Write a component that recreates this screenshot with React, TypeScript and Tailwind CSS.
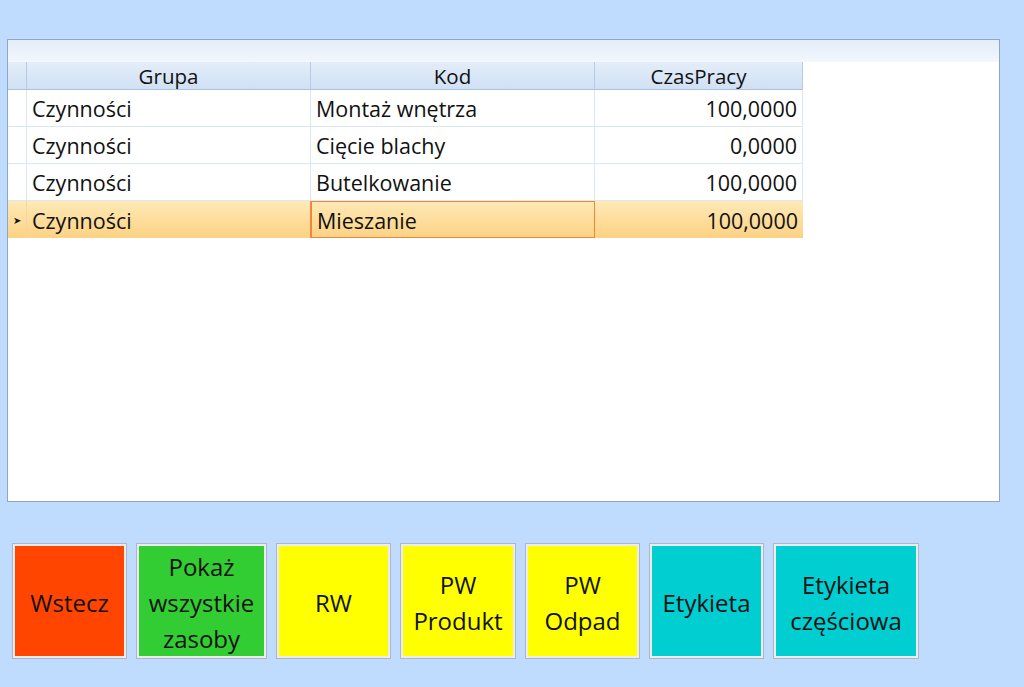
import React from "react";

const rows = [
  { g: "Czynności", k: "Montaż wnętrza", c: "100,0000" },
  { g: "Czynności", k: "Cięcie blachy", c: "0,0000" },
  { g: "Czynności", k: "Butelkowanie", c: "100,0000" },
  { g: "Czynności", k: "Mieszanie", c: "100,0000" },
];

const buttons: { label: string[]; w: string; bg: string }[] = [
  { label: ["Wstecz"], w: "w-[115px]", bg: "bg-[#ff4500]" },
  { label: ["Pokaż", "wszystkie", "zasoby"], w: "w-[131px]", bg: "bg-[#32cd32]" },
  { label: ["RW"], w: "w-[115px]", bg: "bg-[#ffff00]" },
  { label: ["PW", "Produkt"], w: "w-[116px]", bg: "bg-[#ffff00]" },
  { label: ["PW", "Odpad"], w: "w-[115px]", bg: "bg-[#ffff00]" },
  { label: ["Etykieta"], w: "w-[115px]", bg: "bg-[#00ced1]" },
  { label: ["Etykieta", "częściowa"], w: "w-[146px]", bg: "bg-[#00ced1]" },
];

export default function App() {
  return (
    <div
      className="w-[1024px] h-[687px] bg-[#bfdbfd] flex flex-col overflow-hidden text-[#111]"
      style={{ fontFamily: '"Open Sans", "Noto Sans", sans-serif' }}
    >
      <div className="ml-[7px] mt-[39px] w-[993px] h-[463px] border border-[#8ea6c6] bg-white flex flex-col">
        <div className="h-[22px] bg-gradient-to-b from-[#e3ecf9] to-[#f3f7fc] shrink-0" />
        <div className="flex h-[28px] text-[20.5px] leading-none">
          <div className="w-[19px] border-r border-[#b5cbe6] bg-gradient-to-b from-[#e4edf9] to-[#d0e1f4] border-b border-b-[#a9c2e2]" />
          <div className="w-[284px] border-r border-[#b5cbe6] bg-gradient-to-b from-[#e4edf9] to-[#d0e1f4] border-b border-b-[#a9c2e2] flex items-center justify-center pt-[2px]">Grupa</div>
          <div className="w-[284px] border-r border-[#b5cbe6] bg-gradient-to-b from-[#e4edf9] to-[#d0e1f4] border-b border-b-[#a9c2e2] flex items-center justify-center pt-[2px]">Kod</div>
          <div className="w-[208px] border-r border-[#b5cbe6] bg-gradient-to-b from-[#e4edf9] to-[#d0e1f4] border-b border-b-[#a9c2e2] flex items-center justify-center pt-[2px]">CzasPracy</div>
        </div>
        {rows.map((r, i) => {
          const sel = i === rows.length - 1;
          return (
            <div
              key={i}
              className={
                "flex h-[37px] w-[795px] text-[21.5px] leading-none " +
                (sel ? "bg-gradient-to-b from-[#fee9b6] to-[#fcd283]" : "")
              }
            >
              <div className={"w-[19px] border-r flex items-center justify-center text-[10px] " + (sel ? "border-[#f5d59a]" : "border-[#dce7f4] border-b border-b-[#dce7f4]")}>
                {sel ? "➤" : ""}
              </div>
              <div className={"w-[284px] border-r flex items-center pl-[5px] pt-[2px] " + (sel ? "border-[#f0883a]" : "border-[#dce7f4] border-b border-b-[#dce7f4]")}>{r.g}</div>
              <div className={"w-[284px] flex items-center pl-[5px] pt-[2px] " + (sel ? "border border-[#f0883a]" : "border-r border-[#dce7f4] border-b border-b-[#dce7f4]")}>{r.k}</div>
              <div className={"w-[208px] flex items-center justify-end pr-[5px] pt-[2px] " + (sel ? "" : "border-r border-[#dce7f4] border-b border-b-[#dce7f4]")}>{r.c}</div>
            </div>
          );
        })}
      </div>
      <div className="flex gap-[9px] ml-[12px] mt-[41px]">
        {buttons.map((b, i) => (
          <div key={i} className={"h-[116px] border border-[#aeb6c8] p-[2px] bg-[#ececec] " + b.w}>
            <div className={"w-full h-full flex flex-col items-center justify-center text-[24px] leading-[36px] text-center pt-[3px] " + b.bg}>
              {b.label.map((l, j) => (
                <span key={j}>{l}</span>
              ))}
            </div>
          </div>
        ))}
      </div>
    </div>
  );
}
